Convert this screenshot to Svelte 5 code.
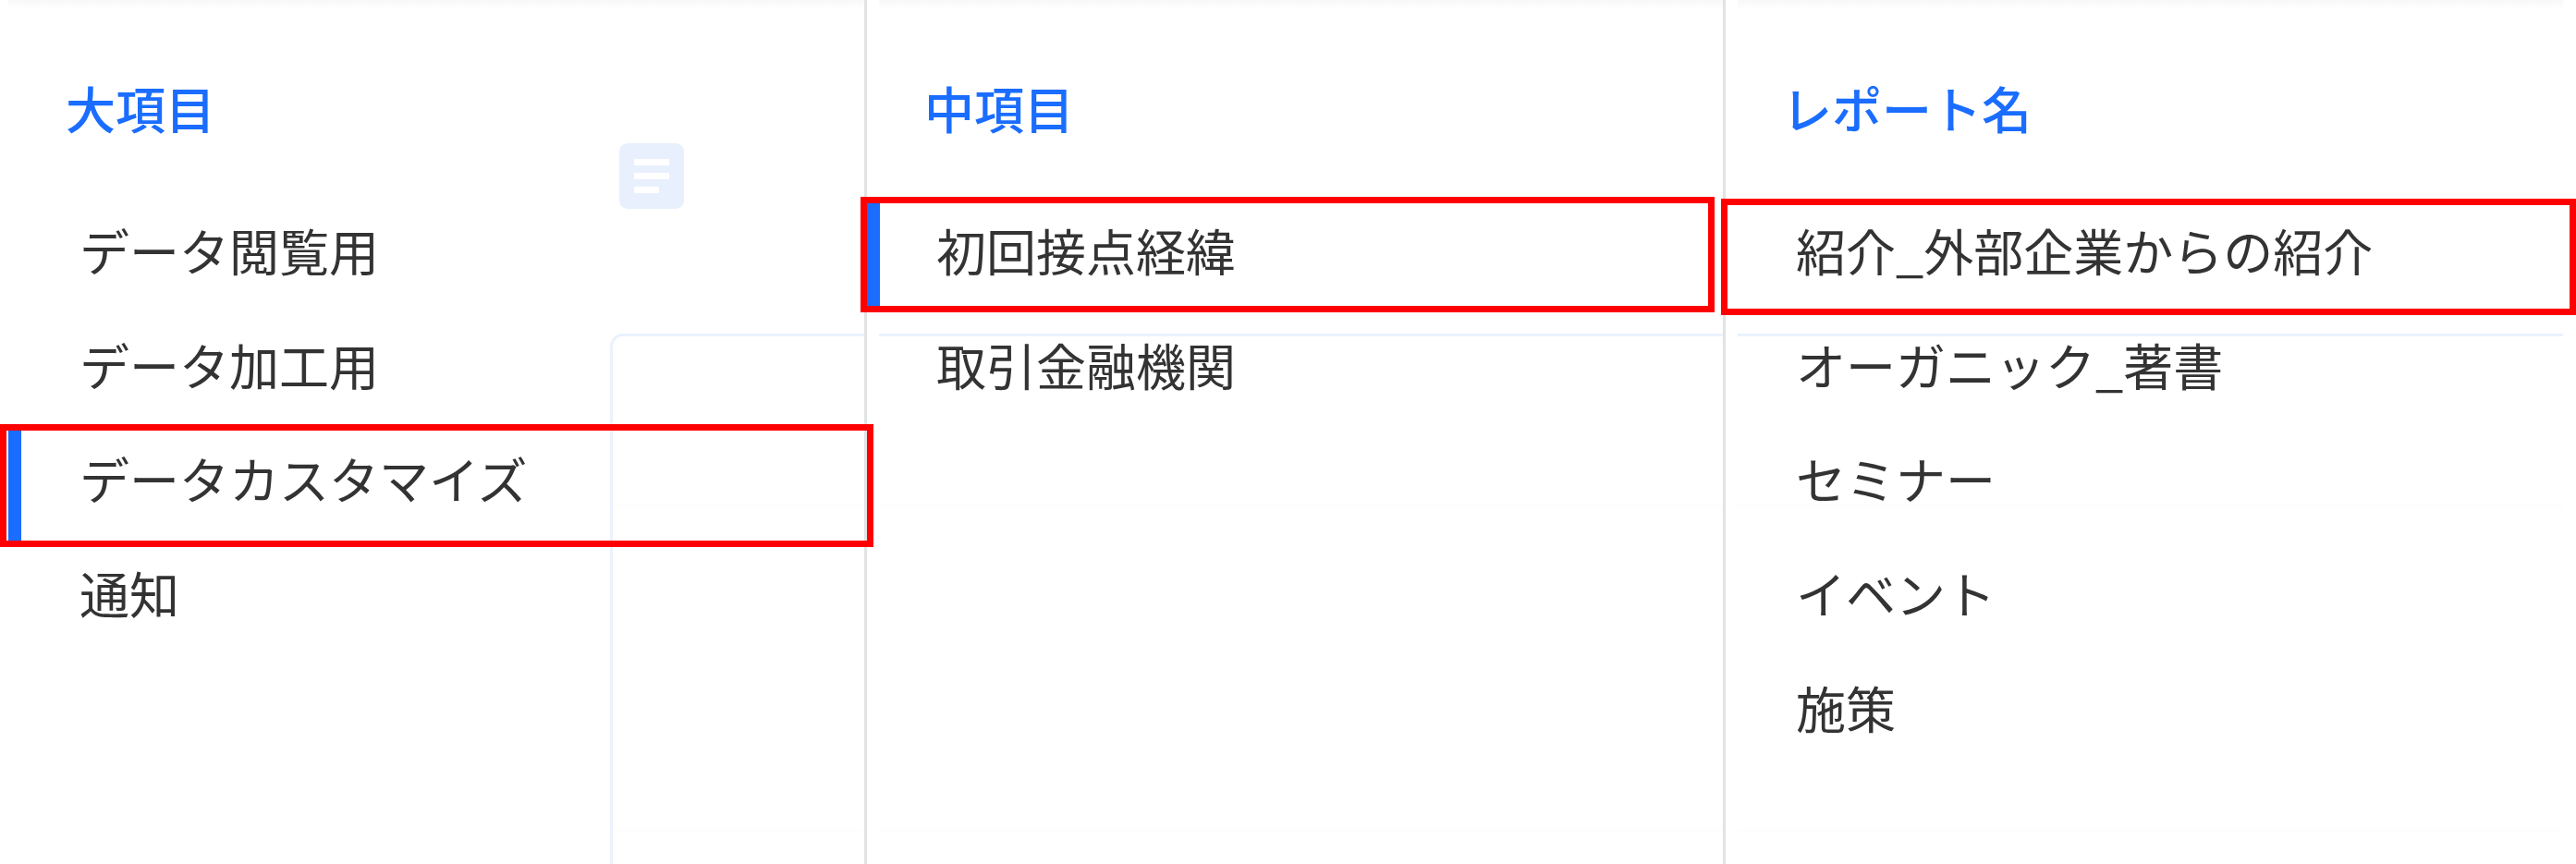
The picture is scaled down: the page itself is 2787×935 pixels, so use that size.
<script lang="ts">
  const columns = [
    {
      title: "大項目",
      cls: "first",
      items: ["データ閲覧用", "データ加工用", "データカスタマイズ", "通知"],
      active: 2,
    },
    {
      title: "中項目",
      cls: "second",
      items: ["初回接点経緯", "取引金融機関"],
      active: 0,
    },
    {
      title: "レポート名",
      cls: "third",
      items: ["紹介_外部企業からの紹介", "オーガニック_著書", "セミナー", "イベント", "施策"],
      active: -1,
    },
  ];
</script>

<div class="page">
  <!-- page behind the menu, only faintly visible -->
  <div class="backdrop">
    <div class="top-strip"></div>
    <div class="doc-icon">
      <span></span>
      <span></span>
      <span class="short"></span>
    </div>
    <div class="card">
      <div class="card-row"></div>
      <div class="card-row tall"></div>
    </div>
  </div>

  <div class="menu">
    {#each columns as col}
      <section class="col {col.cls}">
        <h2>{col.title}</h2>
        <ul>
          {#each col.items as item, i}
            <li class:active={i === col.active}><span class="label">{item}</span></li>
          {/each}
        </ul>
      </section>
    {/each}
  </div>

  <!-- red annotation boxes on top of the screenshot -->
  <div class="mark mark-first"></div>
  <div class="mark mark-second"></div>
  <div class="mark mark-third"></div>
</div>

<style>
  :global(body) {
    background: #fff;
  }

  .page {
    position: relative;
    width: 2787px;
    height: 935px;
    overflow: hidden;
    background: #fff;
    font-family: "Noto Sans CJK JP", "Noto Sans", sans-serif;
  }

  .backdrop {
    position: absolute;
    inset: 0;
  }

  .top-strip {
    position: absolute;
    top: 0;
    left: 9px;
    right: 14px;
    height: 10px;
    background: linear-gradient(#f8f8f8, #fff);
  }

  .doc-icon {
    position: absolute;
    left: 670px;
    top: 155px;
    width: 70px;
    height: 71px;
    padding: 17px 16px 0;
    box-sizing: border-box;
    display: flex;
    flex-direction: column;
    gap: 8px;
    background: #e8f0fe;
    border-radius: 9px;
  }

  .doc-icon span {
    height: 7px;
    background: #fff;
  }

  .doc-icon span.short {
    width: 27px;
  }

  .card {
    position: absolute;
    left: 660px;
    right: 14px;
    top: 361px;
    height: 640px;
    box-sizing: border-box;
    border: 3px solid #ebf2fe;
    border-right: none;
    border-bottom: none;
    border-top-left-radius: 14px;
  }

  .card-row {
    height: 182px;
    border-bottom: 3px solid #fcfdfc;
  }

  .card-row.tall {
    height: 348px;
  }

  .menu {
    position: relative;
    display: flex;
    height: 100%;
  }

  .col {
    position: relative;
    box-sizing: border-box;
    flex: none;
  }

  .first {
    width: 938px;
    border-right: 3px solid #e2e3e5;
  }

  .second {
    width: 929px;
    border-right: 3px solid #e2e3e5;
  }

  .third {
    width: 920px;
  }

  /* the items start with a white gutter that hides the card lines */
  .second::before,
  .third::before {
    content: "";
    position: absolute;
    left: 0;
    top: 0;
    bottom: 0;
    width: 13px;
    background: #fff;
  }

  h2 {
    position: relative;
    margin: 0;
    height: 210px;
    padding: 78px 0 0 71px;
    box-sizing: border-box;
    font-size: 54px;
    font-weight: 500;
    line-height: 77px;
    color: #1a6dff;
    filter: blur(0.7px);
  }

  .second h2 {
    padding-left: 62px;
  }

  .third h2 {
    padding-left: 61px;
  }

  ul {
    position: relative;
    margin: 0;
    padding: 0;
    list-style: none;
  }

  li {
    position: relative;
    height: 123.7px;
    padding-left: 86px;
    box-sizing: border-box;
    font-size: 54px;
    line-height: 121px;
    color: #333;
  }

  .label {
    display: inline-block;
    filter: blur(0.7px);
  }

  .second li {
    padding-left: 75px;
  }

  .third li {
    padding-left: 76px;
  }

  li.active::before {
    content: "";
    position: absolute;
    left: 0;
    top: 3px;
    bottom: 0;
    width: 14px;
    background: #1a6dff;
  }

  .first li.active::before {
    left: 9px;
    top: 9px;
    bottom: -4px;
  }

  .mark {
    position: absolute;
    box-sizing: border-box;
    border: 7px solid #f00;
  }

  .mark-first {
    left: 0;
    top: 459px;
    width: 945px;
    height: 133px;
  }

  .mark-second {
    left: 931px;
    top: 213px;
    width: 924px;
    height: 125px;
  }

  .mark-third {
    left: 1862px;
    top: 215px;
    width: 925px;
    height: 126px;
  }
</style>
